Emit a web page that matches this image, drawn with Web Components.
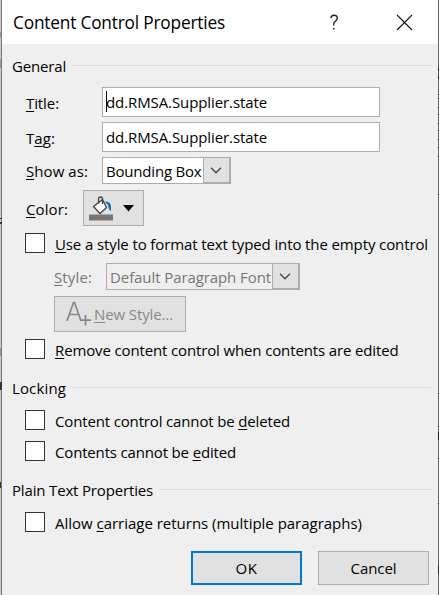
<!DOCTYPE html>
<html lang="en">
<head>
<meta charset="utf-8">
<title>Content Control Properties</title>
<style>
html,body{margin:0;height:100%;overflow:hidden}
body{background:#c9c9c9;font:15px/20px "Open Sans","Noto Sans",sans-serif;color:#000}
u{text-decoration:underline;text-decoration-skip-ink:none;text-underline-offset:2px;text-decoration-thickness:1px}
</style>
</head>
<body>
<dialog-window>
  <title-bar slot="title"><fit-text w="212" style="font-size:17.3px">Content Control Properties</fit-text></title-bar>
  <group-head style="margin-top:12px"><fit-text w="54">General</fit-text></group-head>
  <form-row style="margin-top:11px;height:30px;--label:76px"><fit-text slot="label" w="33"><u>T</u>itle:</fit-text><text-field caret><fit-text w="161">dd.RMSA.Supplier.state</fit-text></text-field></form-row>
  <form-row style="margin-top:5px;height:30px;--label:76px"><fit-text slot="label" w="29">T<u>a</u>g:</fit-text><text-field><fit-text w="161">dd.RMSA.Supplier.state</fit-text></text-field></form-row>
  <form-row style="margin-top:5px;height:27px;--label:76px"><fit-text slot="label" w="62"><u>S</u>how as:</fit-text><combo-box style="width:129px"><fit-text w="95.500">Bounding Box</fit-text></combo-box></form-row>
  <form-row style="margin-top:6px;height:36px;--label:57px"><fit-text slot="label" w="42"><u>C</u>olor:</fit-text><color-button></color-button></form-row>
  <check-row style="margin-top:7px"><fit-text w="373"><u>U</u>se a style to format text typed into the empty control</fit-text></check-row>
  <form-row style="margin-top:10px;height:27px;--indent:52px;--label:52px;color:#777"><fit-text slot="label" w="38"><u>S</u>tyle:</fit-text><combo-box disabled style="width:194px"><fit-text w="161">Default Paragraph Font</fit-text></combo-box></form-row>
  <style-button><fit-text w="79"><u>N</u>ew Style...</fit-text></style-button>
  <check-row style="margin-top:7px"><fit-text w="343.500"><u>R</u>emove content control when contents are edited</fit-text></check-row>
  <group-head style="margin-top:19px"><fit-text w="54">Locking</fit-text></group-head>
  <check-row style="margin-top:12px"><fit-text w="235">Content control cannot be <u>d</u>eleted</fit-text></check-row>
  <check-row style="margin-top:11px"><fit-text w="181">Contents cannot be <u>e</u>dited</fit-text></check-row>
  <group-head style="margin-top:19px"><fit-text w="141">Plain Text Properties</fit-text></group-head>
  <check-row style="margin-top:12px"><fit-text w="307">Allow <u>c</u>arriage returns (multiple paragraphs)</fit-text></check-row>
  <button-bar><push-button primary><fit-text w="22">OK</fit-text></push-button><push-button><fit-text w="46">Cancel</fit-text></push-button></button-bar>
</dialog-window>
<script>
function define(name, html, connected) {
  const t = document.createElement('template');
  t.innerHTML = html;
  customElements.define(name, class extends HTMLElement {
    constructor() { super(); this.attachShadow({mode: 'open'}).append(t.content.cloneNode(true)); }
    connectedCallback() { if (connected) connected.call(this); }
  });
}
const base = '*{box-sizing:border-box}';
define('dialog-window', `<style>${base}
:host{display:block;box-sizing:border-box;height:595px;padding:0 1px 0 2px;background:linear-gradient(90deg,#ccc 1px,#777 1px 2px,#efefef 2px 438px,#666 438px);position:relative}
.edge{position:absolute;left:0;top:0}
</style><slot name="title"></slot><slot></slot>
<svg class="edge" width="439" height="595" aria-hidden="true" shape-rendering="crispEdges"><path fill="#999" d="M0 32h1v6h-1zM0 59h1v9h-1zM0 348h1v8h-1z"/><path fill="#333" d="M0 218h2v1h-2zM0 222h2v2h-2zM0 382h2v8h-2zM0 482h1v6h-1z"/><path fill="#222" d="M438 68h1v3h-1zM438 76h1v3h-1zM438 94h1v1h-1zM438 98h1v1h-1zM438 107h1v1h-1zM438 114h1v1h-1zM438 123h1v1h-1zM438 130h1v1h-1zM438 139h1v1h-1zM438 147h1v1h-1zM438 156h1v1h-1zM438 194h1v1h-1zM438 393h1v1h-1zM438 426h1v1h-1zM438 432h1v8h-1zM438 458h1v1h-1zM438 503h1v1h-1zM438 566h1v8h-1z"/></svg>`);
define('fit-text', `<style>:host{display:block;white-space:nowrap;flex:none}span{display:inline-block}</style><span><slot></slot></span>`, function () {
  const span = this.shadowRoot.querySelector('span');
  const w = Number(this.getAttribute('w'));
  span.style.letterSpacing = (w - span.getBoundingClientRect().width) / this.textContent.length + 'px';
  this.style.width = w + 'px';
});
define('title-bar', `<style>${base}
:host{display:flex;box-sizing:border-box;height:44px;background:#fff;padding:0 25px 0 11px;align-items:center}
slot{display:block;padding-top:2px}.sp{flex:1}svg{display:block}
</style><slot></slot><span class="sp"></span><svg style="margin-right:57px" width="9" height="17" viewBox="0 0 9 17" fill="none" stroke="#222" stroke-width="1.4"><path d="M1 4C1 .3 7.3.2 7.3 4c0 3-3.6 3.3-3.6 6v1.500M3 14.800h1.600"/></svg><svg width="17" height="17" viewBox="0 0 17 17" stroke="#111" stroke-width="1.1"><path d="M1 1l15 15M16 1L1 16"/></svg>`);
define('group-head', `<style>
:host{display:flex;height:20px;padding:0 7px 0 10px;gap:7px}
i{flex:1;height:1px;background:#dadada;margin-top:9px}
</style><slot></slot><i></i>`);
define('form-row', `<style>
:host{display:flex;align-items:center;padding-left:var(--indent,24px)}
.l{width:var(--label);flex:none;padding-top:1px}
</style><div class="l"><slot name="label"></slot></div><slot></slot>`);
define('text-field', `<style>
:host{display:flex;box-sizing:border-box;width:278px;height:30px;border:1px solid #abadb3;background:#fff;padding-left:3px;align-items:center;position:relative}
:host([caret])::before{content:"";position:absolute;left:3px;top:3px;width:1px;height:21px;background:#000}
</style><slot></slot>`);
define('combo-box', `<style>
:host{display:flex;box-sizing:border-box;height:27px;border:1px solid #abadb3;background:#fff;padding-left:3px;align-items:center;justify-content:space-between}
:host([disabled]){background:#efefef}
.b{box-sizing:border-box;width:28px;height:27px;margin-right:-1px;border:1px solid #abadb3;border-right-width:2px;border-bottom-width:2px;background:#e1e1e1;display:grid;place-items:center;padding-right:1px}
</style><slot></slot><div class="b"><svg width="12" height="7" viewBox="0 0 12 7" fill="none" stroke="#444" stroke-width="1.3"><path d="M1 .8l5 5 5-5"/></svg></div>`);
define('color-button', `<style>
:host{display:flex;box-sizing:border-box;width:61px;height:36px;border:1px solid #abadb3;background:#e1e1e1;padding:5px 9px 0 5px;justify-content:space-between}
.a{margin-top:9px}
</style><svg width="25" height="25" viewBox="0 0 25 25"><path fill="#fff" stroke="#444" stroke-width="1.3" d="M4.500 10.500L13.500 3.500l4 8-6.500 6z"/><path fill="none" stroke="#444" stroke-width="1.3" d="M9.500 7.500V3q0-2 2-2t2 2v5"/><path fill="#1e6fb0" d="M15.500 5.500q6-.5 6.500 5v4.500q-2.500-1-3-6z"/><path fill="#767676" d="M0 18.500h24v6H0z"/></svg><svg class="a" width="11" height="7" viewBox="0 0 11 7"><path d="M0 0h11L5.500 6.500z"/></svg>`);
define('style-button', `<style>
:host{display:flex;box-sizing:border-box;width:132px;height:36px;margin:6px 0 0 52px;border:1px solid #abadb3;background:#e1e1e1;color:#888;padding:0 0 0 11px;align-items:center;gap:3px}
svg{margin-top:-1px}
</style><svg width="25" height="25" viewBox="0 0 25 25" fill="none" stroke="#888" stroke-width="1.7"><path d="M1 20L7.500 1.500h1L15 20M3.500 13.500h9M19.500 14v10.500M14 19.200h11"/></svg><slot></slot>`);
define('check-row', `<style>
:host{display:flex;height:20px;padding-left:23px;gap:10px}
i{box-sizing:border-box;width:20px;height:20px;border:1px solid #333;background:#fff;flex:none}
div{padding-top:1px}
</style><i></i><div><slot></slot></div>`);
define('button-bar', `<style>:host{display:flex;justify-content:flex-end;gap:16px;padding:19px 9px 0 0}</style><slot></slot>`);
define('push-button', `<style>
:host{display:flex;box-sizing:border-box;width:111px;height:34px;border:1px solid #adadad;background:#e1e1e1;align-items:center;justify-content:center}
:host([primary]){border:2px solid #0078d7}
</style><slot></slot>`);
</script>
</body>
</html>
